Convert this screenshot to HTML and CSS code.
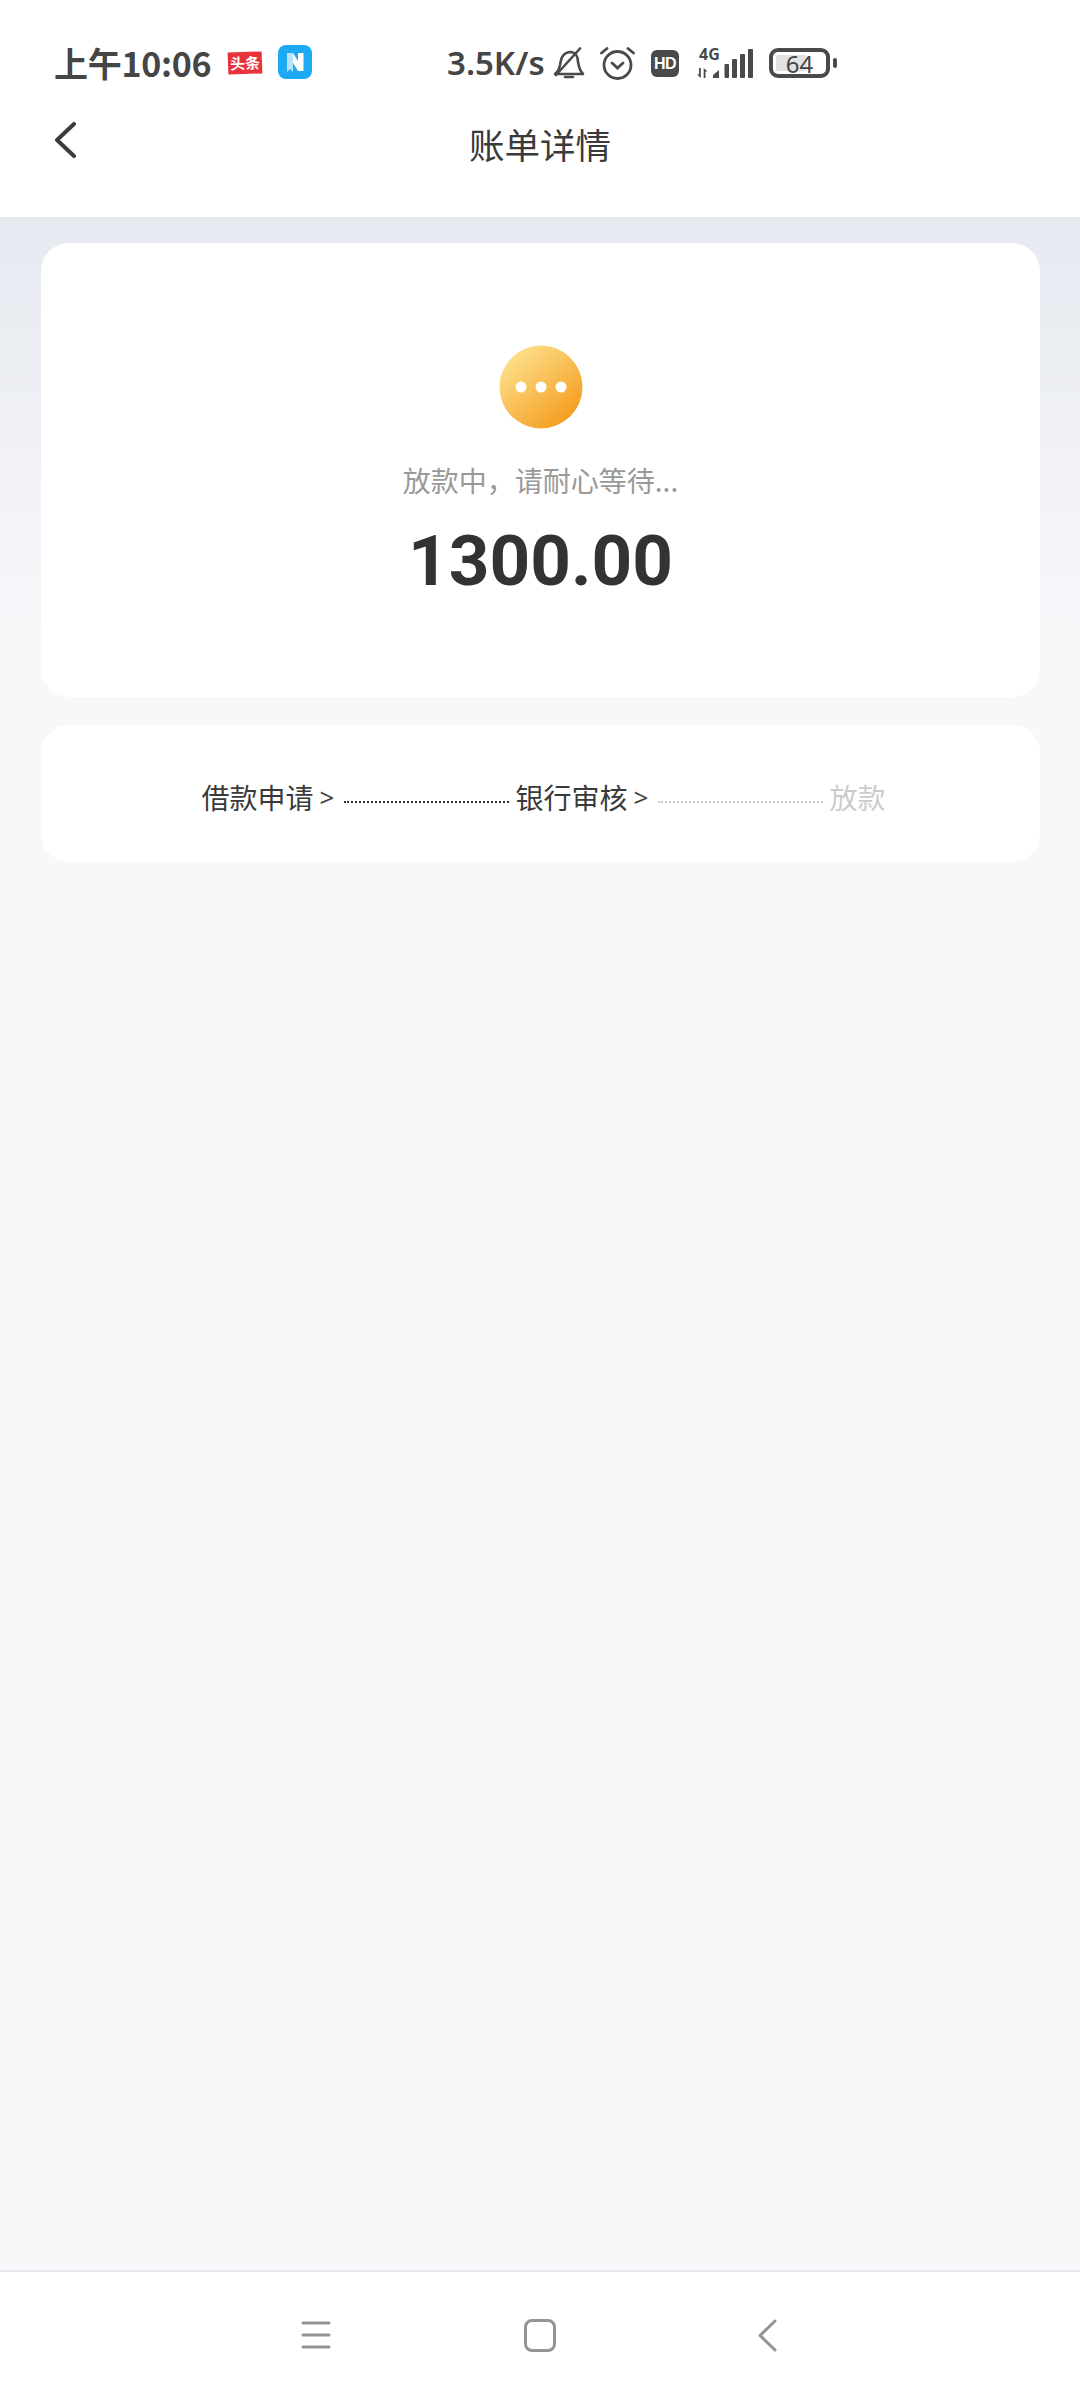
FILE: index.html
```html
<!DOCTYPE html>
<html lang="zh-CN">
<head>
<meta charset="utf-8">
<title>账单详情</title>
<link rel="stylesheet" href="styles.css">
</head>
<body>
<div class="screen">
  <header class="top">
    <div class="status">
      <span class="time">上午10:06</span>
      <span class="toutiao"><span class="toutiao-text">头条</span></span>
      <svg class="napp" viewBox="0 0 34 34"><rect width="34" height="34" rx="8" fill="#1ea9f5"/><path d="M9 8h6v19l-3-3-3 3z" fill="#b9e3fb"/><path d="M15 8l5 8V8h5.500v18H20l-5-8z" fill="#fff"/></svg>
      <span class="speed">3.5K/s</span>
      <svg class="bell" viewBox="0 0 32 32" fill="none" stroke="#4a4a4a" stroke-width="2.600"><path d="M2 27c3-2 4-4 5-9 1-6 2-12 10-13 6 0 8 5 8 10 1 6 2 9 5 12z" stroke-linejoin="round"/><path d="M12 30h8" stroke-linecap="round"/><path d="M3 28L27 1.500" stroke-linecap="round"/></svg>
      <svg class="alarm" viewBox="0 0 35 34" fill="none" stroke="#4a4a4a" stroke-width="2.800" stroke-linecap="round"><circle cx="17.500" cy="19" r="13.500"/><path d="M12 17l5.500 5 5.500-5"/><path d="M1.500 7L7 2.500M33.500 7L28 2.500"/></svg>
      <span class="hd">HD</span>
      <span class="signal">
        <span class="net">4G</span>
        <svg class="bars" viewBox="0 0 58 30" fill="#4a4a4a"><path d="M3 19h1.800v10L1 25.500h2z"/><path d="M9.500 29H7.700V19l3.800 3.500h-2z"/><path d="M17 29v-3l6-5v8z"/><rect x="28.500" y="15" width="4.500" height="14" rx="1"/><rect x="36" y="10" width="5" height="19" rx="1"/><rect x="44" y="5" width="5" height="24" rx="1"/><rect x="52" y="0" width="5" height="29" rx="1"/></svg>
      </span>
      <span class="battery"><span class="battery-fill"></span><span class="battery-num">64</span></span>
      <span class="battery-nub"></span>
    </div>
    <div class="titlebar">
      <svg class="back" viewBox="0 0 22 36" fill="none" stroke="#3c3c3c" stroke-width="4" stroke-linecap="round" stroke-linejoin="round"><path d="M20 2L3 18l17 16"/></svg>
      <h1 class="title">账单详情</h1>
    </div>
  </header>

  <main class="content">
    <section class="card hero">
      <svg class="pending" viewBox="0 0 84 84"><defs><linearGradient id="pg" x1="0.15" y1="0.1" x2="0.85" y2="0.9"><stop offset="0" stop-color="#fde08c"/><stop offset="1" stop-color="#f59c1e"/></linearGradient></defs><circle cx="42" cy="42" r="41.500" fill="url(#pg)"/><circle cx="22" cy="42" r="5.500" fill="#fff"/><circle cx="42" cy="42" r="5.500" fill="#fff"/><circle cx="62" cy="42" r="5.500" fill="#fff"/></svg>
      <p class="hint">放款中，请耐心等待...</p>
      <p class="amount">1300.00</p>
    </section>
    <section class="card steps">
      <span class="step">借款申请</span>
      <span class="arrow">&gt;</span>
      <span class="line"></span>
      <span class="step">银行审核</span>
      <span class="arrow">&gt;</span>
      <span class="line line-muted"></span>
      <span class="step step-muted">放款</span>
    </section>
  </main>

  <nav class="nav">
    <svg class="nav-menu" viewBox="0 0 30 28" fill="none" stroke="#949494" stroke-width="3" stroke-linecap="round"><path d="M2 2h26M2 14h26M2 26h26"/></svg>
    <svg class="nav-home" viewBox="0 0 32 33" fill="none" stroke="#949494" stroke-width="3"><rect x="1.500" y="1.500" width="29" height="30" rx="6.500"/></svg>
    <svg class="nav-back" viewBox="0 0 19 33" fill="none" stroke="#949494" stroke-width="3" stroke-linecap="round" stroke-linejoin="round"><path d="M17 2L2 16.500 17 31"/></svg>
  </nav>
</div>
</body>
</html>
```
FILE: styles.css
```css
* { box-sizing: border-box; }
html, body { margin: 0; padding: 0; }
body {
  width: 1080px;
  height: 2400px;
  font-family: "Noto Sans CJK SC", "Noto Sans", sans-serif;
  background: #f6f7f9;
  overflow: hidden;
}
.screen { display: flex; flex-direction: column; height: 2400px; }

.top { background: #fff; height: 217px; flex: none; padding-top: 41px; }
.status {
  display: flex;
  align-items: center;
  height: 44px;
  padding-left: 54px;
  color: #454545;
}
.time { font-size: 34px; font-weight: 700; width: 174px; line-height: 44px; white-space: nowrap; letter-spacing: -0.3px; }
.toutiao {
  width: 34px; height: 22px; background: #e8323c;
  display: flex; align-items: center; justify-content: center; overflow: hidden;
  transform: rotate(-2deg);
}
.toutiao-text { font-size: 15px; font-weight: 700; color: #fff; line-height: 22px; white-space: nowrap; }
.napp { width: 34px; height: 34px; margin-left: 16px; margin-top: -2px; }
.speed {
  font-family: "Noto Sans", sans-serif; font-size: 33px; font-weight: 600;
  margin-left: 135px; width: 106px; line-height: 44px; white-space: nowrap;
}
.bell { width: 32px; height: 32px; }
.alarm { width: 35px; height: 34px; margin-left: 15px; margin-top: -1px; }
.hd {
  width: 28px; height: 27px; margin-left: 16px; background: #4a4a4a; border-radius: 6px;
  color: #fff; font-family: "Liberation Sans", sans-serif; font-weight: 700; font-size: 16px;
  line-height: 27px; text-align: center; letter-spacing: -0.5px;
}
.signal { position: relative; width: 58px; height: 30px; margin-left: 17px; margin-top: 1px; }
.bars { display: block; width: 58px; height: 30px; }
.net {
  position: absolute; left: 3px; top: -3px; font-family: "Noto Sans", sans-serif;
  font-size: 16px; font-weight: 700; line-height: 16px; color: #4a4a4a;
}
.battery {
  position: relative; width: 61px; height: 30px; margin-left: 15px;
  border: 4px solid #4a4a4a; border-radius: 9px;
  display: flex; align-items: center; justify-content: center;
}
.battery-fill { position: absolute; left: 3px; top: 3px; bottom: 3px; width: 31px; background: #e2e2e2; border-radius: 2px; }
.battery-num { position: relative; top: 1px; font-family: "Noto Sans", sans-serif; font-size: 24px; line-height: 22px; color: #454545; }
.battery-nub { width: 4px; height: 10px; margin-left: 3px; background: #4a4a4a; border-radius: 2px; }

.titlebar { position: relative; height: 56px; margin-top: 31px; display: flex; align-items: center; justify-content: center; }
.back { position: absolute; left: 54px; top: 6px; width: 22px; height: 36px; }
.title { margin: 0; font-size: 35.500px; font-weight: 400; color: #3a3a3a; line-height: 56px; }

.content {
  flex: 1;
  padding: 26px 41px 0 41px;
  display: flex;
  flex-direction: column;
  gap: 28px;
  background: linear-gradient(180deg, #e6e9f0 0, #f7f8fa 420px);
}
.card { background: #fff; border-radius: 28px; width: 999px; }
.hero { height: 454px; display: flex; flex-direction: column; align-items: center; padding-top: 102px; }
.pending { width: 84px; height: 84px; display: block; }
.hint { margin: 29px 0 0; font-size: 28px; line-height: 44px; color: #999; white-space: nowrap; }
.amount {
  margin: 17px 0 0; font-family: Roboto, sans-serif; font-weight: 700; font-size: 71px;
  line-height: 84px; color: #333; white-space: nowrap;
}
.steps { height: 137px; display: flex; align-items: center; justify-content: center; padding-left: 6px; }
.step { font-size: 28px; line-height: 40px; color: #3a3a3a; white-space: nowrap; position: relative; top: 3px; }
.step-muted { color: #ccc; margin-left: 6px; }
.arrow { font-family: "Noto Sans", sans-serif; font-size: 26px; color: #444; margin: 0 10px 0 6px; line-height: 40px; position: relative; top: 3px; }
.line { width: 165px; height: 0; border-top: 2px dotted #333; margin-right: 6px; position: relative; top: 8px; }
.line-muted { border-top-color: #ccc; margin-right: 0; }

.nav {
  height: 130px; flex: none; background: #fff; border-top: 2px solid #e8e9ec;
  display: flex; align-items: center; padding-bottom: 2px;
}
.nav-menu { width: 30px; height: 28px; margin-left: 301px; }
.nav-home { width: 32px; height: 33px; margin-left: 193px; }
.nav-back { width: 19px; height: 33px; margin-left: 202px; }
```
